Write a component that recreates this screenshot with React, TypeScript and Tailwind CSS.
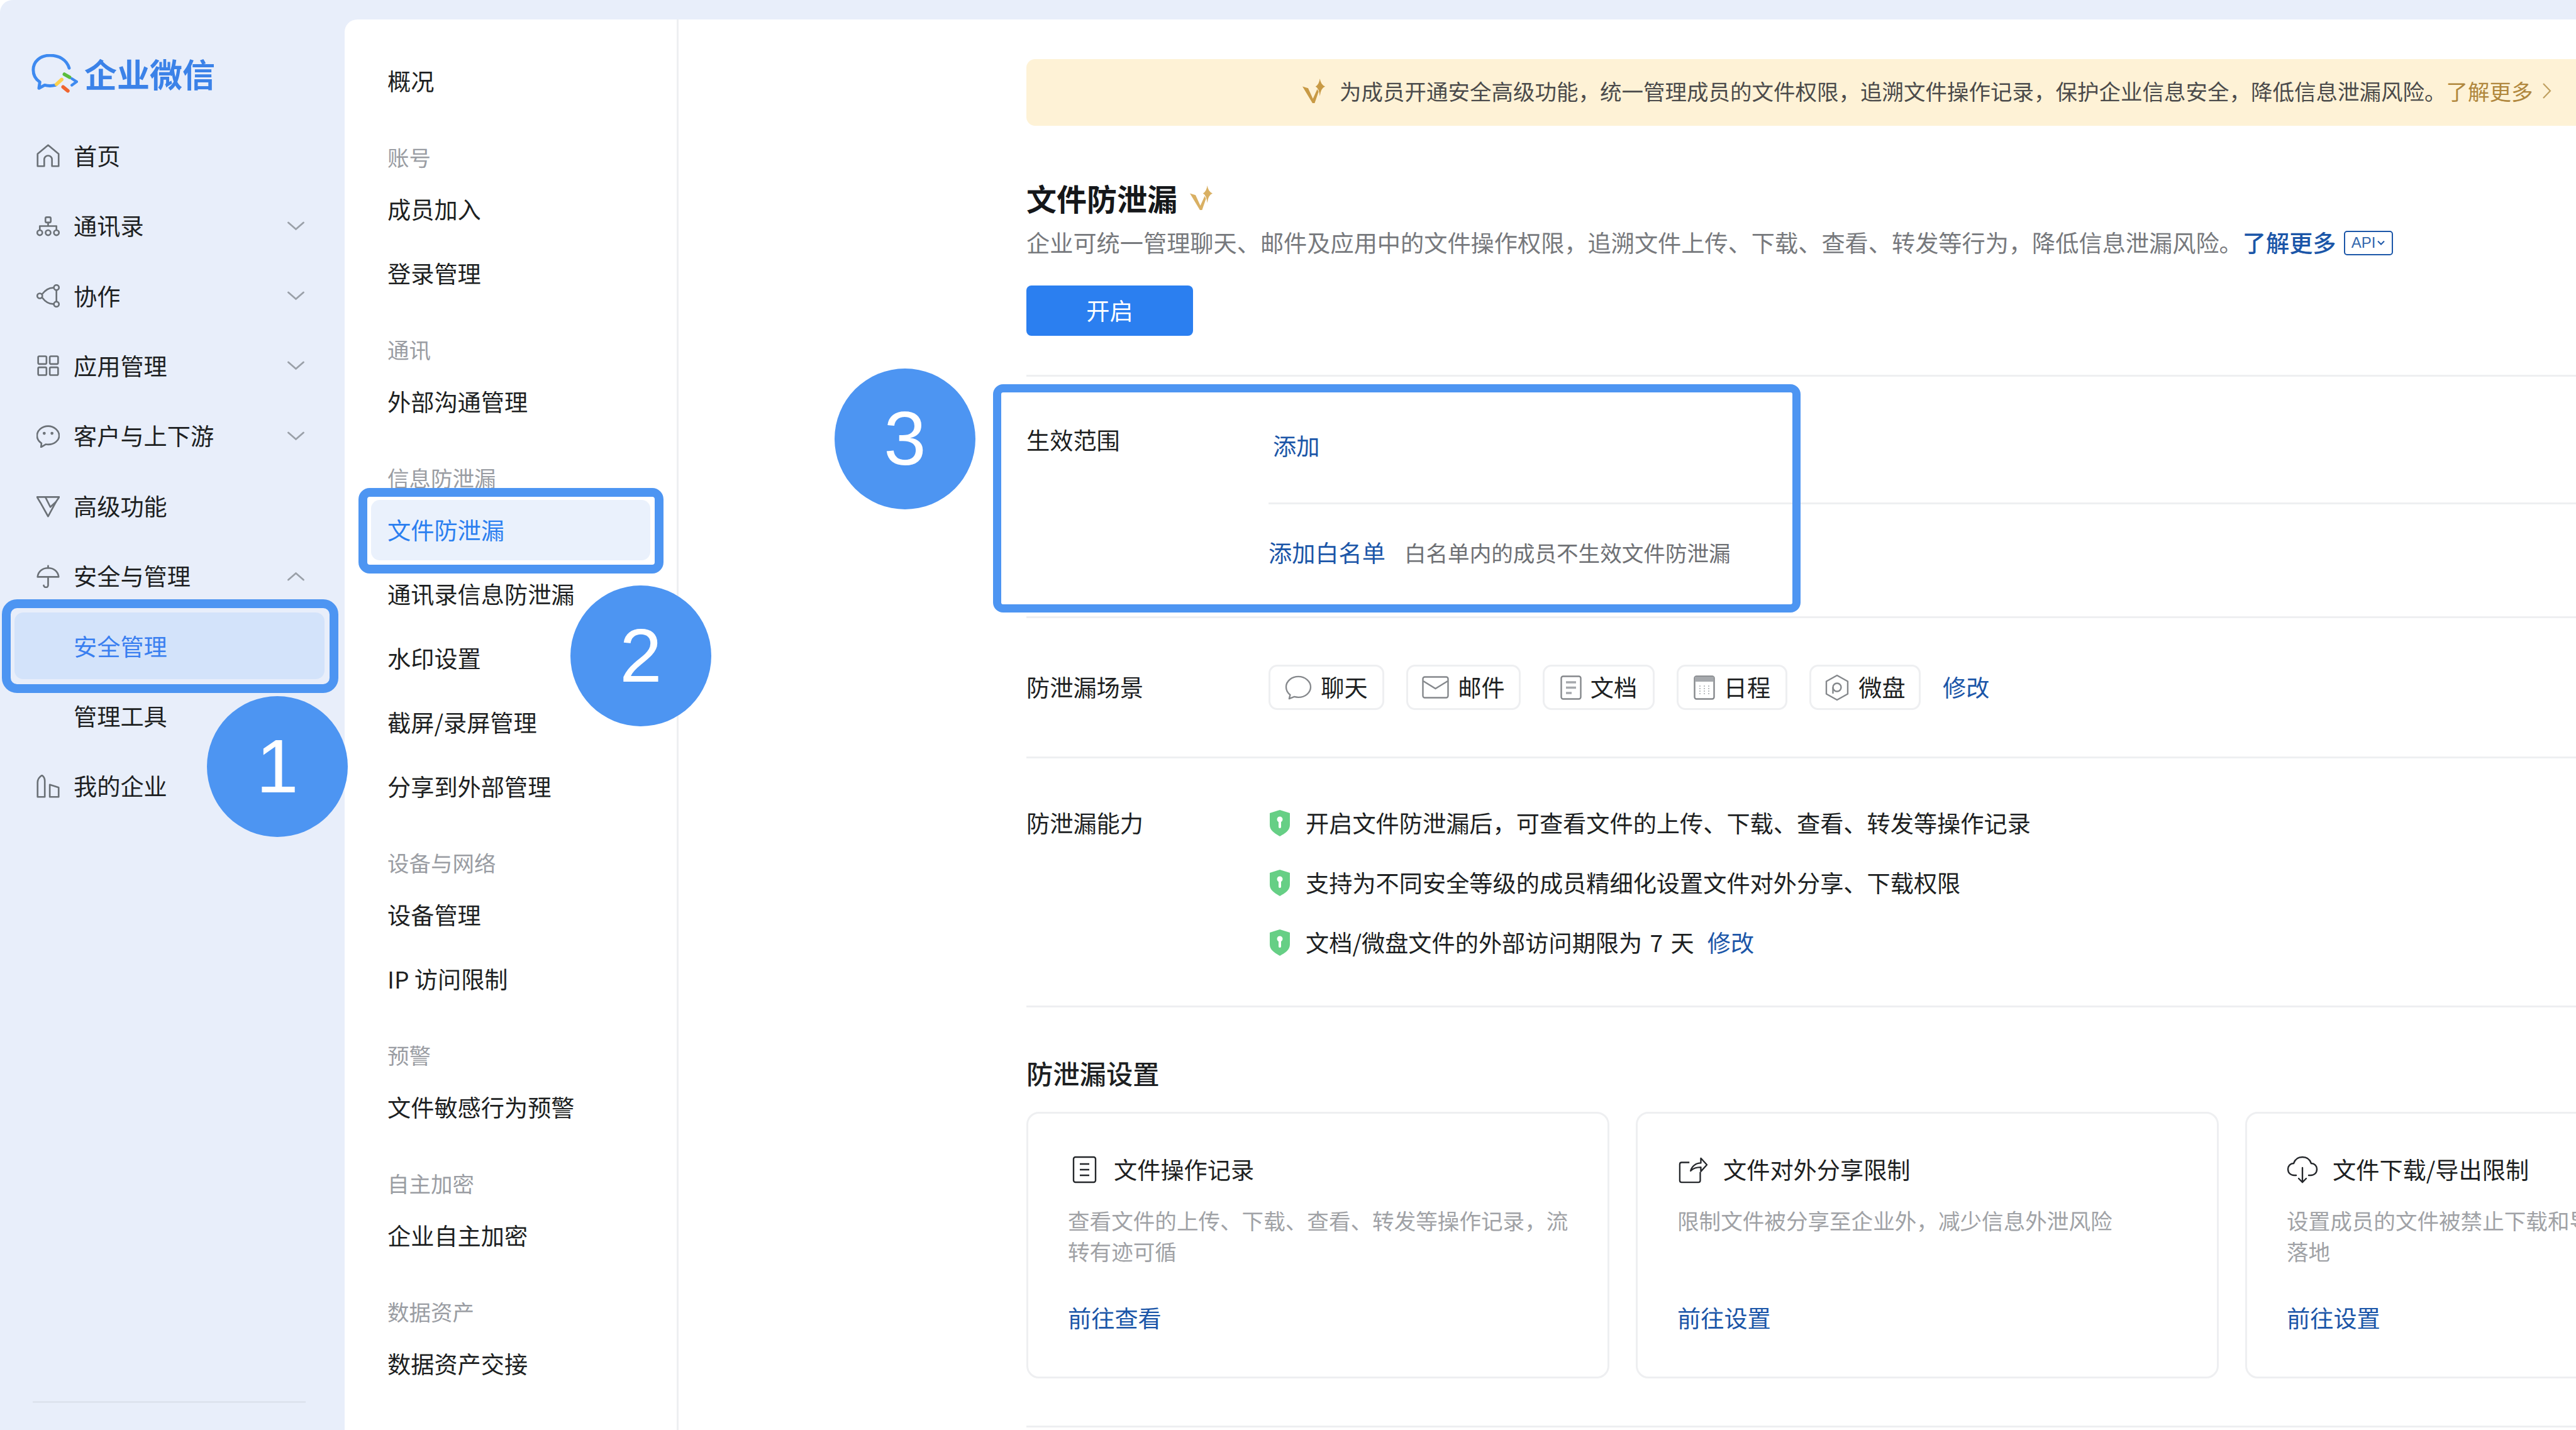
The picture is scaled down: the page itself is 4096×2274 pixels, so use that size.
import type { ReactNode } from "react";

const LINE = "bg-[#eeeff1]";
const LINK = "text-[#1b56a8]";

// Sidebar icons share a tight 21 unit box so the strokes reach its edges
function NavIcon({ children }: { children: ReactNode }) {
  return (
    <svg
      viewBox="1.5 1.5 21 21"
      fill="none"
      stroke="#6b7177"
      strokeWidth={1.5}
      strokeLinecap="round"
      strokeLinejoin="round"
      className="w-[37px] h-[37px] shrink-0"
    >
      {children}
    </svg>
  );
}

const icons: Record<string, ReactNode> = {
  home: <path d="M2.500 21.500V10.500L12 2.500l9.500 8v11H15.500v-6a3.500 3.500 0 0 0-7 0v6z" />,
  contacts: (
    <>
      <rect x="9.600" y="4" width="4.800" height="4.800" rx="1.200" />
      <path d="M4.500 15v-3h15v3M12 8.800V12" />
      <circle cx="4.500" cy="18" r="2.300" />
      <circle cx="12" cy="18" r="2.300" />
      <circle cx="19.500" cy="18" r="2.300" />
    </>
  ),
  collab: (
    <>
      <circle cx="19.500" cy="4.500" r="2.300" />
      <circle cx="19.500" cy="19.500" r="2.300" />
      <circle cx="4.500" cy="12" r="2.300" />
      <path d="M17.200 4.700C13 4.400 9.600 6.500 6.500 10.600M17.200 19.300C13 19.600 9.600 17.500 6.500 13.400M19.500 6.800v10.400" />
    </>
  ),
  apps: (
    <>
      <rect x="3" y="3.500" width="7.500" height="7" rx="1" />
      <rect x="13.500" y="3.500" width="7.500" height="7" rx="1" />
      <rect x="3" y="13.500" width="7.500" height="7" rx="1" />
      <rect x="13.500" y="13.500" width="7.500" height="7" rx="1" />
    </>
  ),
  customer: (
    <>
      <path d="M12 3C6.600 3 2 6.800 2 11.600c0 2.800 1.600 5.200 4 6.800L5.600 22l4.200-2.600c.7.1 1.400.2 2.200.2 5.400 0 10-3.600 10-8S17.400 3 12 3z" />
      <circle cx="8.500" cy="9.500" r=".6" />
      <circle cx="15.500" cy="9.500" r=".6" />
    </>
  ),
  premium: (
    <>
      <path d="M2 4h20l-3 4.500L12 21.500 5 9z" />
      <path d="M9.500 4l4.500 9 5-4.500" />
    </>
  ),
  security: (
    <>
      <path d="M2.500 12.500C3 7.500 7 4.500 12 4.500s9 3 9.500 8z" />
      <path d="M12 2.500v2M12 12.500v7.200a2 2 0 0 1-4 .5" />
    </>
  ),
  company: (
    <>
      <path d="M2.500 21.500V8.500c0-2.500 1.500-5 4-6.500 1.400 1 2.500 2.500 2.500 5v14.500z" />
      <path d="M13.500 21.500V10.500l8 2.500v8.500z" />
    </>
  ),
};

function Chevron({ up }: { up?: boolean }) {
  return (
    <svg viewBox="0 0 27 15" fill="none" stroke="#9aa0a8" strokeWidth={2.800} strokeLinecap="round" className="w-[27px] h-[15px]">
      <path d={up ? "M1.500 13L13.500 2.500 25.500 13" : "M1.500 2L13.500 12.500 25.500 2"} />
    </svg>
  );
}

function Logo() {
  return (
    <svg viewBox="0 0 106 89" fill="none" strokeLinecap="round" className="w-[74px] h-[62px]">
      <path
        d="M86 32C80 12 62 3 42 3 20 3 4 17 4 36c0 12 6 22 15 28l-2 14 13-7c8 2 16 2 25 0"
        stroke="#3e8af0"
        strokeWidth={7}
        strokeLinejoin="round"
      />
      <path d="M75 46L87 53" stroke="#5bbd3c" strokeWidth={8} />
      <path d="M57 69L69 58" stroke="#fdd14c" strokeWidth={8} />
      <path d="M72 75L83 84" stroke="#f0652f" strokeWidth={8} />
      <path d="M92 56L103 63 92 71" stroke="#3e8af0" strokeWidth={6} />
    </svg>
  );
}

function Sparkle({ color, className }: { color: string; className: string }) {
  return (
    <svg viewBox="0 0 52 56" fill={color} className={className}>
      <path d="M0 18L13 22 24 46 34 24 37 30 28 56H23z" />
      <path d="M40 0Q42 14 52 18 42 22 40 40 38 22 30 18 38 14 40 0z" />
    </svg>
  );
}

function Shield() {
  return (
    <svg viewBox="0 0 36 42" className="w-[36px] h-[42px] shrink-0">
      <path d="M18 0l16 5v19c0 8-7 13-16 18C9 37 2 32 2 24V5z" fill="#66cf85" />
      <circle cx="18" cy="15" r="4.500" fill="#fff" />
      <rect x="16" y="16" width="4" height="13" rx="2" fill="#fff" />
    </svg>
  );
}

const sidebarItems = [
  { label: "首页", icon: "home" },
  { label: "通讯录", icon: "contacts", chevron: "down" },
  { label: "协作", icon: "collab", chevron: "down" },
  { label: "应用管理", icon: "apps", chevron: "down" },
  { label: "客户与上下游", icon: "customer", chevron: "down" },
  { label: "高级功能", icon: "premium" },
  { label: "安全与管理", icon: "security", chevron: "up" },
  { label: "安全管理", active: true },
  { label: "管理工具" },
  { label: "我的企业", icon: "company" },
];

const menuGroups = [
  { items: ["概况"] },
  { title: "账号", items: ["成员加入", "登录管理"] },
  { title: "通讯", items: ["外部沟通管理"] },
  { title: "信息防泄漏", items: ["文件防泄漏", "通讯录信息防泄漏", "水印设置", "截屏/录屏管理", "分享到外部管理"] },
  { title: "设备与网络", items: ["设备管理", "IP 访问限制"] },
  { title: "预警", items: ["文件敏感行为预警"] },
  { title: "自主加密", items: ["企业自主加密"] },
  { title: "数据资产", items: ["数据资产交接"] },
];

function ChipIcon({ type }: { type: string }) {
  const stroke = "#85888c";
  if (type === "chat") {
    return (
      <svg viewBox="0 0 44 40" fill="none" stroke={stroke} strokeWidth={2.400} className="w-[43px] h-[39px]">
        <path d="M22 2C11 2 2 9.500 2 19c0 5 2.600 9.600 6.600 12.800L7 38l8.400-3.200c2 .6 4.300 .9 6.600 .9 11 0 20-7.500 20-16.700S33 2 22 2z" strokeLinejoin="round" />
      </svg>
    );
  }
  if (type === "mail") {
    return (
      <svg viewBox="0 0 43 36" fill="none" stroke={stroke} strokeWidth={2.400} className="w-[43px] h-[36px]">
        <rect x="1.500" y="1.500" width="40" height="33" rx="3" />
        <path d="M2 8l19.500 12L41 8" />
      </svg>
    );
  }
  if (type === "doc") {
    return (
      <svg viewBox="0 0 34 39" fill="none" stroke={stroke} strokeWidth={2.400} className="w-[34px] h-[39px]">
        <rect x="1.500" y="1.500" width="31" height="36" rx="3" />
        <path d="M9 11h16M9 19.500h16M9 28h9" stroke="#a6a9ad" strokeWidth={3.600} />
      </svg>
    );
  }
  if (type === "calendar") {
    return (
      <svg viewBox="0 0 34 39" fill="none" stroke={stroke} strokeWidth={2.400} className="w-[34px] h-[39px]">
        <rect x="1.500" y="1.500" width="31" height="36" rx="3" />
        <rect x="2" y="2" width="30" height="8" fill="#a6a9ad" stroke="none" />
        <path d="M10 16v16M17 16v16M24 16v16" stroke="#a6a9ad" strokeWidth={1.500} strokeDasharray="2 2" />
      </svg>
    );
  }
  return (
    <svg viewBox="0 0 40 43" fill="none" stroke={stroke} strokeWidth={2.400} className="w-[40px] h-[43px]">
      <path d="M20 2l17 9.500v20L20 41 3 31.500v-20z" strokeLinejoin="round" />
      <circle cx="20" cy="21" r="6.500" />
      <path d="M13.500 21v10" />
    </svg>
  );
}

const chips = [
  { label: "聊天", type: "chat", w: "w-[184px]" },
  { label: "邮件", type: "mail", w: "w-[182px]" },
  { label: "文档", type: "doc", w: "w-[178px]" },
  { label: "日程", type: "calendar", w: "w-[176px]" },
  { label: "微盘", type: "drive", w: "w-[177px]" },
];

const cards = [
  {
    title: "文件操作记录",
    desc: "查看文件的上传、下载、查看、转发等操作记录，流转有迹可循",
    link: "前往查看",
    icon: (
      <svg viewBox="0 0 50 46" fill="none" stroke="#24272b" strokeWidth={2.400} className="w-[50px] h-[46px]">
        <rect x="9" y="3" width="35" height="40" rx="3" />
        <path d="M19 14h15M19 23h15M19 32h15" />
      </svg>
    ),
  },
  {
    title: "文件对外分享限制",
    desc: "限制文件被分享至企业外，减少信息外泄风险",
    link: "前往设置",
    icon: (
      <svg viewBox="0 0 52 48" fill="none" stroke="#24272b" strokeWidth={2.400} strokeLinejoin="round" className="w-[50px] h-[46px]">
        <path d="M20 12H7a3 3 0 0 0-3 3v27a3 3 0 0 0 3 3h28a3 3 0 0 0 3-3V28" />
        <path d="M22 26c2-8 9-13 17-13V5l10 11-10 11v-7c-7 0-13 2-17 6z" />
      </svg>
    ),
  },
  {
    title: "文件下载/导出限制",
    desc: "设置成员的文件被禁止下载和导出，防止文件在本地落地",
    link: "前往设置",
    icon: (
      <svg viewBox="0 0 50 46" fill="none" stroke="#24272b" strokeWidth={2.400} strokeLinecap="round" className="w-[50px] h-[46px]">
        <path d="M15 32H12C6 32 2 28 2 22c0-5 4-9 9-9 2-6 7-10 14-10s12 4 14 10c5 0 9 4 9 9 0 6-4 10-10 10h-3" />
        <path d="M25 20v23M19 37l6 6 6-6" />
      </svg>
    ),
  },
];

function Annotation({ n, className }: { n: number; className: string }) {
  return (
    <div className={`absolute w-[224px] h-[224px] rounded-full bg-[#4d95f2] text-white flex items-center justify-center font-['Liberation_Sans',sans-serif] text-[121px] ${className}`}>
      {n}
    </div>
  );
}

export default function App() {
  return (
    <div className="relative w-[4096px] h-[2274px] overflow-hidden bg-white font-['Noto_Sans_CJK_SC','Noto_Sans',sans-serif] text-[37.2px] text-[#1d1f22]">
      <div className="flex h-full bg-[#e8eefa] rounded-tl-[20px]">
        {/* Main nav */}
        <aside className="relative w-[548px] shrink-0">
          <div className="flex items-center gap-[10px] pl-[50px] mt-[87px] mb-[45px] h-[60px]">
            <Logo />
            <span className="text-[52px] leading-none font-bold text-[#3b82e8]">企业微信</span>
          </div>
          {sidebarItems.map((item) => (
            <div key={item.label} className="h-[111.4px] flex items-center">
              {item.active ? (
                <div className="mx-[23px] w-[493px] h-[106px] rounded-[14px] bg-[#d3e3fa] text-[#3a7ff0] pl-[94px] flex items-center">
                  {item.label}
                </div>
              ) : (
                <div className="w-full flex items-center pl-[58px] pr-[64px]">
                  <div className="w-[37px] mr-[22px] shrink-0">{item.icon && <NavIcon>{icons[item.icon]}</NavIcon>}</div>
                  <span className="flex-1">{item.label}</span>
                  {item.chevron && <Chevron up={item.chevron === "up"} />}
                </div>
              )}
            </div>
          ))}
          <div className="absolute left-[52px] top-[2228px] w-[434px] h-[3px] bg-[#dde3ee]" />
        </aside>

        <div className="flex-1 mt-[31px] flex bg-white rounded-tl-[20px] overflow-hidden">
          {/* Secondary menu */}
          <nav className="w-[531px] shrink-0 border-r-[3px] border-[#eeeff1] pt-[47px]">
            {menuGroups.map((group, i) => (
              <div key={i} className={i > 0 ? "mt-[38px]" : ""}>
                {group.title && (
                  <div className="h-[64px] flex items-center pl-[68px] text-[34.5px] text-[#9a9da3]">{group.title}</div>
                )}
                {group.items.map((label) => {
                  const active = label === "文件防泄漏";
                  return (
                    <div key={label} className="h-[102px] flex items-center">
                      <div className={`ml-[42px] w-[444px] h-[96px] rounded-[14px] flex items-center pl-[26px] ${active ? "bg-[#eaf1fc] text-[#2b7ff0]" : ""}`}>
                        {label}
                      </div>
                    </div>
                  );
                })}
              </div>
            ))}
          </nav>

          {/* Content */}
          <main className="flex-1 min-w-0 pl-[553px] pt-[63px]">
            <div className="h-[106px] rounded-l-[14px] bg-[#fef2d6] flex items-center pl-[439px] pb-[5px] text-[34.5px] text-[#4b4b4b] whitespace-nowrap">
              <Sparkle color="#c89a45" className="w-[36px] h-[39px] mr-[23px] shrink-0" />
              <span>为成员开通安全高级功能，统一管理成员的文件权限，追溯文件操作记录，保护企业信息安全，降低信息泄漏风险。</span>
              <span className="text-[#b0873d]">了解更多</span>
              <svg viewBox="0 0 15 27" fill="none" stroke="#c0a060" strokeWidth={2.200} className="ml-[14px] w-[15px] h-[27px] shrink-0">
                <path d="M2 2l11 11.500L2 25" />
              </svg>
            </div>

            <div className="mt-[84px] h-[60px] flex items-center">
              <h1 className="text-[48px] leading-none font-bold text-[#15171a]">文件防泄漏</h1>
              <Sparkle color="#d9b063" className="ml-[20px] w-[36px] h-[39px]" />
            </div>
            <div className="mt-[17px] h-[50px] flex items-center text-[#77797d]">
              企业可统一管理聊天、邮件及应用中的文件操作权限，追溯文件上传、下载、查看、转发等行为，降低信息泄漏风险。
              <span className={`${LINK} font-medium`}>了解更多</span>
              <span className="ml-[12px] w-[78px] h-[39px] border-[2.5px] border-[#1b56a8] rounded-[5px] flex items-center justify-center gap-[3px] text-[24px] text-[#3468ae] font-['Liberation_Sans',sans-serif]">
                API
                <svg viewBox="0 0 12 8" fill="none" stroke="#1b56a8" strokeWidth={2} className="w-[12px] h-[8px]">
                  <path d="M1 1.500l5 5 5-5" />
                </svg>
              </span>
            </div>
            <button className="mt-[43px] w-[265px] h-[80px] rounded-[8px] bg-[#2b7ff0] text-white">开启</button>

            <div className={`mt-[62px] h-[3px] ${LINE}`} />

            {/* Scope */}
            <div className="flex">
              <div className="w-[385px] shrink-0 pt-[76px] h-[381px]">
                <div className="h-[50px] flex items-center">生效范围</div>
              </div>
              <div className="flex-1">
                <div className={`h-[203px] pt-[85px] pl-[7px] border-b-[3px] border-[#eeeff1] ${LINK}`}>
                  <div className="h-[50px] flex items-center">添加</div>
                </div>
                <div className="pt-[52px] h-[50px] box-content flex items-center">
                  <span className={LINK}>添加白名单</span>
                  <span className="ml-[30px] text-[34.6px] text-[#6e7074]">白名单内的成员不生效文件防泄漏</span>
                </div>
              </div>
            </div>
            <div className={`h-[3px] ${LINE}`} />

            {/* Scenes */}
            <div className="flex items-center h-[220px]">
              <div className="w-[385px] shrink-0">防泄漏场景</div>
              <div className="flex items-center gap-[35px]">
                {chips.map((chip) => (
                  <div key={chip.label} className={`${chip.w} h-[72px] border-[3px] border-[#eeeff1] rounded-[14px] flex items-center justify-center gap-[14px]`}>
                    <ChipIcon type={chip.type} />
                    {chip.label}
                  </div>
                ))}
                <span className={LINK}>修改</span>
              </div>
            </div>
            <div className={`h-[3px] ${LINE}`} />

            {/* Capabilities */}
            <div className="flex pt-[78px] pb-[75px]">
              <div className="w-[385px] shrink-0 h-[50px] flex items-center">防泄漏能力</div>
              <div className="flex flex-col gap-[45px]">
                <div className="h-[50px] flex items-center gap-[23px]"><Shield />开启文件防泄漏后，可查看文件的上传、下载、查看、转发等操作记录</div>
                <div className="h-[50px] flex items-center gap-[23px]"><Shield />支持为不同安全等级的成员精细化设置文件对外分享、下载权限</div>
                <div className="h-[50px] flex items-center gap-[23px]">
                  <Shield />
                  <span className="[word-spacing:4px]">文档/微盘文件的外部访问期限为 7 天</span>
                  <span className={`${LINK} -ml-[2px]`}>修改</span>
                </div>
              </div>
            </div>
            <div className={`h-[3px] ${LINE}`} />

            {/* Settings */}
            <h2 className="mt-[74px] h-[60px] flex items-center text-[42.3px] font-medium">防泄漏设置</h2>
            <div className="mt-[32px] flex gap-[42px]">
              {cards.map((card) => (
                <div key={card.title} className="w-[927px] h-[424px] shrink-0 border-[3px] border-[#eeeff1] rounded-[20px] pt-[64px] pl-[63px] pr-[50px]">
                  <div className="h-[50px] flex items-center gap-[23px]">
                    {card.icon}
                    {card.title}
                  </div>
                  <p className="mt-[31px] h-[98px] text-[34.6px] leading-[49px] text-[#a0a2a6]">{card.desc}</p>
                  <div className={`mt-[57px] h-[50px] flex items-center ${LINK}`}>{card.link}</div>
                </div>
              ))}
            </div>
            <div className={`mt-[75px] h-[3px] ${LINE}`} />
          </main>
        </div>
      </div>

      {/* Tutorial callouts drawn over the page */}
      <div className="absolute left-[3px] top-[953px] w-[535px] h-[149px] border-[14px] border-[#4d95f2] rounded-[24px]" />
      <div className="absolute left-[570px] top-[776px] w-[485px] h-[136px] border-[14px] border-[#4d95f2] rounded-[18px]" />
      <div className="absolute left-[1579px] top-[611px] w-[1284px] h-[363px] border-[13px] border-[#4d95f2] rounded-[16px]" />
      <Annotation n={1} className="left-[329px] top-[1107px]" />
      <Annotation n={2} className="left-[907px] top-[931px]" />
      <Annotation n={3} className="left-[1327px] top-[586px]" />
    </div>
  );
}
